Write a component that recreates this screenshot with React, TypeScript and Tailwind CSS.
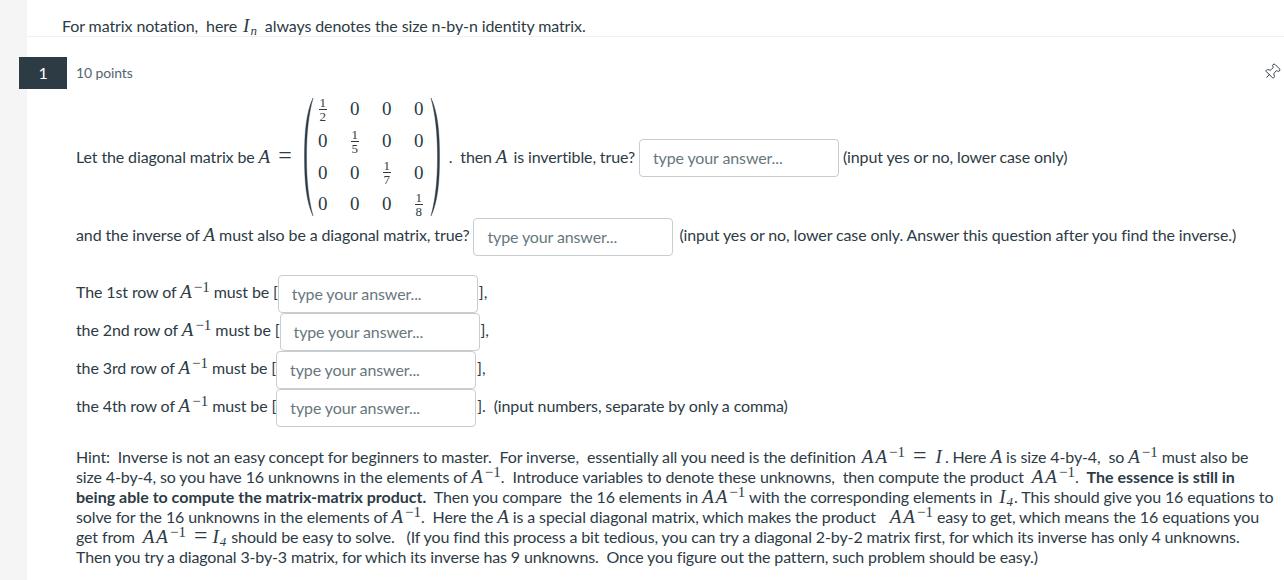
import { Pin } from "lucide-react";
import type { ReactNode } from "react";

const MATH = "font-['Liberation_Serif',serif] tracking-normal leading-[0]";

function M({ children, className = "" }: { children: ReactNode; className?: string }) {
  return <span className={`${MATH} italic text-[19px] tracking-[2px] ${className}`}>{children}</span>;
}

function Eq() {
  return <span className={`${MATH} text-[24px] ml-[8px] mr-[5px]`}>=</span>;
}

function Inv({ prefix = "A", className = "" }: { prefix?: string; className?: string }) {
  return (
    <span className={`${MATH} text-[19px] whitespace-nowrap ${className}`}>
      <i className="tracking-[2px]">{prefix}</i>
      <span className="align-[6px] text-[15px] leading-[0]">−1</span>
    </span>
  );
}

function Sub({ n, className = "" }: { n: string; className?: string }) {
  return (
    <span className={`${MATH} text-[19px] whitespace-nowrap mr-[1px] ${className}`}>
      <i>I</i>
      <span className="ml-[1px] align-[-3px] text-[13px] italic leading-[0]">{n}</span>
    </span>
  );
}

function Answer({ className = "" }: { className?: string }) {
  return (
    <input
      readOnly
      placeholder="type your answer..."
      className={`h-[38px] w-[200px] shrink-0 rounded-[4px] border border-[#c7cdd1] bg-white pb-[2px] pl-[13px] text-[16px] tracking-[-0.12px] text-[#2d3b45] outline-none placeholder:text-[#68777d] placeholder:opacity-100 ${className}`}
    />
  );
}

function Frac({ d }: { d: string }) {
  return (
    <span className="inline-flex flex-col items-center font-['Liberation_Serif',serif] text-[13px] leading-[13px]">
      <span className="border-b border-[#2d3b45] px-[1px]">1</span>
      <span>{d}</span>
    </span>
  );
}

function Paren({ flip = false }: { flip?: boolean }) {
  return (
    <svg width="11" height="120" viewBox="0 0 11 120" className={`shrink-0 ${flip ? "-scale-x-100" : ""}`}>
      <path d="M10 1 C3 16 1.5 36 1.5 60 C1.5 84 3 104 10 119 C5.5 102 3.5 84 3.5 60 C3.5 36 5.5 18 10 1Z" fill="#2d3b45" stroke="#2d3b45" strokeWidth="0.4" />
    </svg>
  );
}

function Matrix() {
  const rows = [
    ["1/2", "0", "0", "0"],
    ["0", "1/5", "0", "0"],
    ["0", "0", "1/7", "0"],
    ["0", "0", "0", "1/8"],
  ];
  return (
    <span className="mb-[1px] ml-[2px] flex shrink-0 items-center">
      <Paren />
      <span className="-ml-[7px] -mr-[5px] grid w-[128px] grid-cols-[repeat(4,32px)] auto-rows-[31.7px]">
        {rows.flat().map((c, i) => (
          <span key={i} className="flex items-center justify-center font-['Liberation_Serif',serif] text-[19px]">
            {c.startsWith("1/") ? <Frac d={c.slice(2)} /> : c}
          </span>
        ))}
      </span>
      <Paren flip />
    </span>
  );
}

function Row({ label, nth, end }: { label: string; nth: string; end: ReactNode }) {
  return (
    <div className="flex h-[38px] items-center whitespace-pre">
      <span className="-mt-[4px] whitespace-pre">
        {label} {nth} row of <Inv /> must be [
      </span>
      <Answer />
      <span className="-mt-[4px] ml-[1px] whitespace-pre">{end}</span>
    </div>
  );
}

export default function App() {
  return (
    <div className="flex h-[580px] w-[1284px] overflow-hidden bg-white font-['Lato',sans-serif] text-[16px] tracking-[-0.12px] text-[#2d3b45]">
      {/* Left gutter */}
      <div className="w-[27px] shrink-0 bg-[#f5f5f5]" />

      <div className="relative min-w-0 flex-1">
        {/* Group header */}
        <div className="h-[37px] border-b border-[#f0f0f0] pl-[35px] pt-[14px] leading-[24px] tracking-[-0.1px] whitespace-pre">
          For matrix notation,  here <Sub n="n" className="ml-[2px] mr-[4px]" /> always denotes the size n-by-n identity matrix.
        </div>

        {/* Question number badge */}
        <div className="absolute left-[-8px] top-[57px] flex h-[32px] w-[48px] items-center justify-center bg-[#2d3b45] text-white">
          1
        </div>

        <div className="pl-[49px]">
          <div className="flex h-[52px] items-center justify-between pr-[3px] pt-[18px] text-[14px] text-[#556572]">
            <span>10 points</span>
            <Pin className="h-[18px] w-[18px] rotate-45 text-[#2d3b45]" strokeWidth={1.25} />
          </div>

          <div className="mt-[8px] flex h-[121px] items-center whitespace-pre">
            <span className="mb-[2px]">Let the diagonal matrix be <M>A</M><Eq /> </span>
            <Matrix />
            <span className="mb-[2px]">  .  then <M className="mr-[2px]">A</M> is invertible, true? </span>
            <Answer className="mt-[1px]" />
            <span className="mb-[2px] ml-[4px]">(input yes or no, lower case only)</span>
          </div>

          <div className="flex h-[38px] items-center whitespace-pre">
            <span className="-mt-[4px]">and the inverse of <M>A</M> must also be a diagonal matrix, true? </span>
            <Answer />
            <span className="-mt-[4px] ml-[6px]">(input yes or no, lower case only. Answer this question after you find the inverse.)</span>
          </div>

          <div className="mt-[19px]">
            <Row label="The" nth="1st" end="]," />
            <Row label="the" nth="2nd" end="]," />
            <Row label="the" nth="3rd" end="]," />
            <Row label="the" nth="4th" end="].  (input numbers, separate by only a comma)" />
          </div>

          {/* Hint */}
          <div className="mt-[19.5px] whitespace-pre [&>div]:h-[20.2px] [&>div]:leading-[20.2px] [&_b]:tracking-normal">
            <div>
              Hint:  Inverse is not an easy concept for beginners to master.  For inverse,  essentially all you need is the definition <Inv prefix="AA" className="ml-[2px]" /><Eq /><M className="ml-[4px] mr-[3px]">I</M>. Here <M>A</M> is size 4-by-4,  so <Inv /> must also be
            </div>
            <div>
              size 4-by-4, so you have 16 unknowns in the elements of <Inv />.  Introduce variables to denote these unknowns,  then compute the product  <Inv prefix="AA" />.  <b>The essence is still in</b>
            </div>
            <div>
              <b>being able to compute the matrix-matrix product.</b>  Then you compare  the 16 elements in <Inv prefix="AA" /> with the corresponding elements in <Sub n="4" className="ml-[3px]" />. This should give you 16 equations to
            </div>
            <div>
              solve for the 16 unknowns in the elements of <Inv />.  Here the <M>A</M> is a special diagonal matrix, which makes the product  <Inv prefix="AA" className="ml-[6px]" /> easy to get, which means the 16 equations you
            </div>
            <div>
              get from  <Inv prefix="AA" /><Eq /><Sub n="4" /> should be easy to solve.   (If you find this process a bit tedious, you can try a diagonal 2-by-2 matrix first, for which its inverse has only 4 unknowns.
            </div>
            <div className="tracking-[-0.14px]">
              Then you try a diagonal 3-by-3 matrix, for which its inverse has 9 unknowns.  Once you figure out the pattern, such problem should be easy.)
            </div>
          </div>
        </div>
      </div>
    </div>
  );
}
